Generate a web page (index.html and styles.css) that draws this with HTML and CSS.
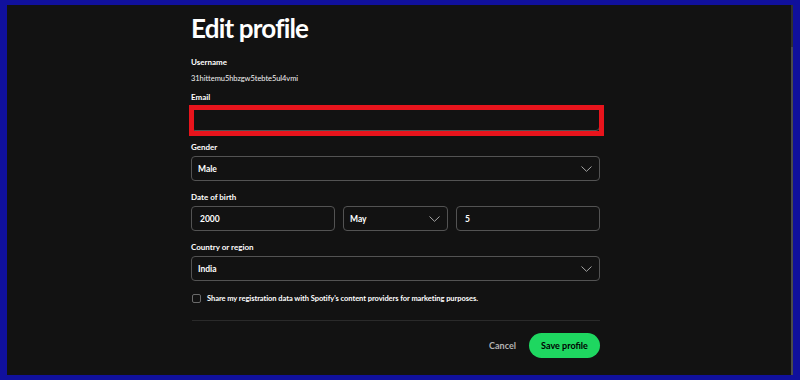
FILE: index.html
```html
<!DOCTYPE html>
<html lang="en">
<head>
  <meta charset="UTF-8" />
  <title>Edit profile</title>
  <link rel="stylesheet" href="styles.css">
</head>
<body>
  <div class="window">
    <main class="page">
      <div class="profile">
        <h1>Edit profile</h1>

        <div class="field field-static">
          <span class="label">Username</span>
          <span class="value">31hittemu5hbzgw5tebte5ul4vmi</span>
        </div>

        <div class="field">
          <span class="label">Email</span>
          <div class="input-wrap">
            <div class="input"></div>
            <span class="highlight"></span>
          </div>
        </div>

        <div class="field">
          <span class="label">Gender</span>
          <div class="input select">
            <span>Male</span>
            <svg class="chevron" width="11" height="6" viewBox="0 0 11 6"><path d="M0.5 0.5 L5.5 5.3 L10.5 0.5" /></svg>
          </div>
        </div>

        <div class="field">
          <span class="label">Date of birth</span>
          <div class="date-row">
            <div class="input">2000</div>
            <div class="input select">
              <span>May</span>
              <svg class="chevron" width="11" height="6" viewBox="0 0 11 6"><path d="M0.5 0.5 L5.5 5.3 L10.5 0.5" /></svg>
            </div>
            <div class="input">5</div>
          </div>
        </div>

        <div class="field">
          <span class="label">Country or region</span>
          <div class="input select">
            <span>India</span>
            <svg class="chevron" width="11" height="6" viewBox="0 0 11 6"><path d="M0.5 0.5 L5.5 5.3 L10.5 0.5" /></svg>
          </div>
        </div>

        <label class="consent">
          <span class="checkbox"></span>
          Share my registration data with Spotify's content providers for marketing purposes.
        </label>

        <hr class="divider">

        <div class="actions">
          <button class="btn-cancel">Cancel</button>
          <button class="btn-save">Save profile</button>
        </div>
      </div>
    </main>
    <div class="scrollbar"></div>
  </div>
</body>
</html>
```

FILE: styles.css
```css
* { box-sizing: border-box; }
body {
  margin: 0;
  background: #10109c;
  font-family: Lato, 'Liberation Sans', sans-serif;
  color: #fff;
}
.window {
  height: 380px;
  padding: 5px 7px;
  display: flex;
}
.page {
  flex: 1;
  background: #121212;
}
.scrollbar {
  width: 2px;
  background: linear-gradient(#2f2f2f 0 42px, #4a4a4a 42px);
}
.profile {
  width: 409px;
  margin-left: 184px;
  padding-top: 8px;
}
h1 {
  margin: 0 0 14px;
  font-size: 26px;
  line-height: 30px;
  font-weight: 700;
  letter-spacing: -0.8px;
}
.field {
  display: flex;
  flex-direction: column;
  margin-bottom: 11px;
}
.field-static {
  margin-bottom: 8px;
}
.label {
  font-size: 8px;
  line-height: 11px;
  font-weight: 700;
  margin-bottom: 3px;
}
.field-static .label {
  margin-bottom: 5px;
}
.value {
  font-size: 7.5px;
  line-height: 11px;
  letter-spacing: -0.05px;
  color: #f2f2f2;
}
.input-wrap {
  position: relative;
}
.input {
  height: 25px;
  border: 1px solid #535353;
  border-radius: 4px;
  background: #121212;
  padding: 0 8px;
  display: flex;
  align-items: center;
  font-size: 8.5px;
  font-weight: 700;
}
.select {
  justify-content: space-between;
  padding: 0 7px 0 6px;
}
.chevron path {
  fill: none;
  stroke: #a7a7a7;
  stroke-width: 1;
}
.highlight {
  position: absolute;
  left: -2px;
  right: -4px;
  top: -1px;
  bottom: -5px;
  border: 5px solid #e8141c;
}
.date-row {
  display: grid;
  grid-template-columns: 1fr 105px 1fr;
  gap: 8px;
}
.consent {
  display: flex;
  align-items: center;
  gap: 6px;
  margin-top: 11px;
  padding-left: 1px;
  font-size: 7.5px;
  line-height: 13px;
  font-weight: 700;
  letter-spacing: -0.06px;
}
.checkbox {
  width: 9px;
  height: 9px;
  border: 1px solid #6a6a6a;
  border-radius: 2px;
}
.divider {
  border: none;
  border-top: 1px solid #2a2a2a;
  margin: 15px 0 12px 1px;
}
.actions {
  display: flex;
  justify-content: flex-end;
  align-items: center;
  gap: 13px;
}
button {
  font-family: inherit;
  font-size: 9px;
  font-weight: 700;
  border: none;
  cursor: pointer;
}
.btn-cancel {
  background: none;
  color: #b3b3b3;
  padding: 0;
}
.btn-save {
  height: 25px;
  width: 71px;
  border-radius: 13px;
  background: #1ed760;
  color: #000;
}
```
